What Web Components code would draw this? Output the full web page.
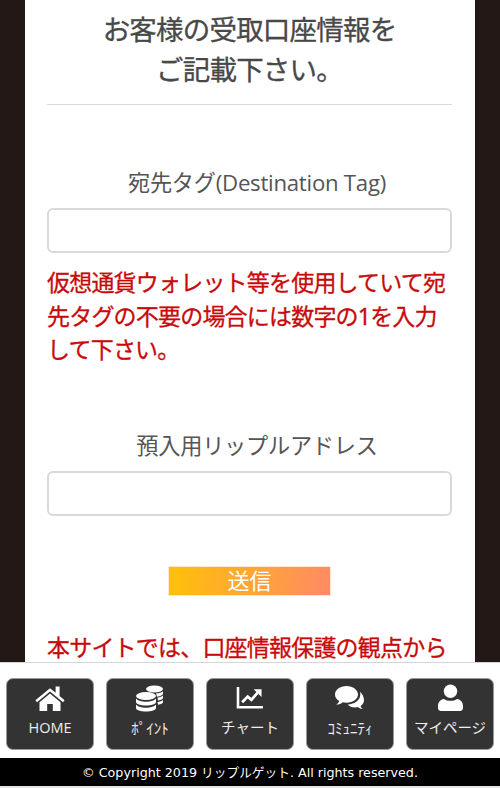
<!DOCTYPE html>
<html lang="ja"><head><meta charset="utf-8"><title>受取口座情報</title>
<style>
html,body{margin:0;padding:0;height:100%;overflow:hidden;background:#231815}
body{font-family:"Noto Sans","Noto Sans CJK JP",sans-serif}
</style></head><body>
<account-page>
  <form-title>お客様の受取口座情報を<br>ご記載下さい。</form-title>
  <form-field label="宛先タグ(Destination Tag)" style="--top:63px"></form-field>
  <warn-text style="--top:13px">仮想通貨ウォレット等を使用していて宛先タグの不要の場合には数字の1を入力して下さい。</warn-text>
  <form-field label="預入用リップルアドレス" style="--top:64px"></form-field>
  <send-button>送信</send-button>
  <warn-text style="--top:35px">本サイトでは、口座情報保護の観点から</warn-text>
</account-page>
<bottom-nav>
  <nav-item label="HOME"><svg viewBox="0 0 32 26" width="32" height="26"><path fill="#fff" d="M16 3.200 1.400 15.200l1.600 2L16 6.600l13 10.600 1.600-2-5-4.100V1.500h-4v6.300Z"/><path fill="#fff" d="M16 8.600 5.500 17.200V26h7.700v-7h5.600v7h7.700v-8.800Z"/></svg></nav-item>
  <nav-item label="ﾎﾟｲﾝﾄ" narrow><svg viewBox="0 0 30 28" width="30" height="28"><g fill="#fff"><ellipse cx="19.500" cy="5" rx="8.500" ry="3.500"/><path d="M21 9.500c3-.2 5.500-1 7-2.300v2.600c0 1.300-2.500 2.500-6 2.900ZM22.500 13.700c2.500-.3 4.500-1 5.500-2.100v2.500c0 1-2 2-5 2.500ZM22.500 18c2.500-.3 4.500-1 5.500-2.100v2.300c0 1-2 2-5 2.500Z"/><ellipse cx="11" cy="12" rx="10" ry="4"/><path d="M1 14.500c1.500 2 5.500 3.200 10 3.200s8.500-1.200 10-3.200V18c0 2-4.500 3.500-10 3.500S1 20 1 18Z"/><path d="M1 20.500c1.500 2 5.500 3.200 10 3.200s8.500-1.200 10-3.200V24c0 2-4.500 3.500-10 3.500S1 26 1 24Z"/></g></svg></nav-item>
  <nav-item label="チャート"><svg viewBox="0 0 30 26" width="28" height="24"><path fill="none" stroke="#fff" stroke-width="2.800" d="M2 1v22h27"/><path fill="none" stroke="#fff" stroke-width="3" d="m6.500 17.500 6-6 4 3.500 7-8"/><path fill="#fff" d="M19 3.500h8.500V12Z"/></svg></nav-item>
  <nav-item label="ｺﾐｭﾆﾃｨ" narrow><svg viewBox="0 0 32 26" width="32" height="26"><path fill="#fff" d="M12.500 1C6 1 1 4.800 1 9.500c0 2.700 1.600 5 4.200 6.600-.3 1.300-1.200 2.500-3 3.500 2.800 0 5-.8 6.600-2.300 1.200.3 2.400.4 3.700.4 6.500 0 11.500-3.800 11.500-8.200S19 1 12.500 1Z"/><path fill="#fff" d="M25.800 6.800c.3.900.5 1.800.5 2.700 0 5.600-5.600 9.700-12.600 9.900 1.700 1.900 4.300 3 7.300 3 1 0 2-.1 2.900-.4 1.300 1.300 2.900 2 5 2-1.200-.8-2-1.900-2.300-3.100 2.300-1.400 3.400-3.400 3.400-5.300 0-3.700-1.600-6.900-4.200-8.800Z"/></svg></nav-item>
  <nav-item label="マイページ"><svg viewBox="0 0 26 28" width="25" height="27"><circle cx="13" cy="7.500" r="7" fill="#fff"/><path fill="#fff" d="M6 15.500c2 1.300 4.300 2 7 2s5-.7 7-2c3.500.6 6 3.300 6 7V25c0 1.700-1.300 3-3 3H3c-1.700 0-3-1.300-3-3v-2.500c0-3.700 2.500-6.400 6-7Z"/></svg></nav-item>
</bottom-nav>
<copyright-bar>© Copyright 2019 リップルゲット. All rights reserved.</copyright-bar>
<script>
function def(name, css, html){
  customElements.define(name, class extends HTMLElement{
    constructor(){super();const r=this.attachShadow({mode:'open'});r.innerHTML='<style>'+css+'</style>'+html;}
  });
}
const FONT='"Noto Sans","Noto Sans CJK JP",sans-serif';
def('account-page',`:host{display:block;box-sizing:border-box;width:450px;height:788px;margin:0 auto;background:#fff;padding:0 23px 0 22px;overflow:hidden;font-family:${FONT}}`,'<slot></slot>');
def('form-title',`:host{display:block;text-align:center;font-size:27.500px;letter-spacing:-.8px;line-height:40px;font-weight:400;-webkit-text-stroke:.3px #484848;color:#484848;padding:10px 0 14px;border-bottom:1.500px solid #d9d9d9}`,'<slot></slot>');
customElements.define('form-field',class extends HTMLElement{
  constructor(){super();const r=this.attachShadow({mode:'open'});
    r.innerHTML=`<style>:host{display:block;margin-top:var(--top,0)}
    label{display:block;text-align:center;padding-left:15px;font-size:22.200px;line-height:30px;color:#555;margin-bottom:10px;font-family:"Open Sans","Noto Sans CJK JP",sans-serif;letter-spacing:-.25px}
    input{display:block;box-sizing:border-box;width:100%;height:45px;border:2px solid #d9d9d9;border-radius:6px;background:#fff;outline:0;margin:0}</style>
    <label>${this.getAttribute('label')}</label><input type="text">`;}
});
def('warn-text',`:host{display:block;margin-top:var(--top,0);font-size:23px;letter-spacing:-.8px;line-height:33.500px;font-weight:400;-webkit-text-stroke:.3px #c80a0a;color:#c80a0a;margin-right:-3px}`,'<slot></slot>');
def('send-button',`:host{display:block;box-sizing:border-box;width:163px;height:30px;margin:50px auto 0;background:linear-gradient(100deg,#ffc107,#ff8a65);border:1px solid #ffe6cf;color:#fff;font-size:22px;line-height:27px;text-align:center}`,'<slot></slot>');
def('bottom-nav',`:host{position:fixed;left:0;right:0;top:662px;height:96px;box-sizing:border-box;background:#fff;border-top:1.500px solid #d6d6d6;padding:14.500px 6px 0;display:flex;justify-content:space-between;align-items:flex-start;font-family:${FONT}}`,'<slot></slot>');
customElements.define('nav-item',class extends HTMLElement{
  constructor(){super();const r=this.attachShadow({mode:'open'});
    const n=this.hasAttribute('narrow');
    r.innerHTML=`<style>:host{display:flex;flex-direction:column;align-items:center;box-sizing:border-box;width:88px;height:72px;background:#333;border:1px solid #999;border-radius:7px;color:#fff;padding-top:4px}
    .i{height:30px;display:flex;align-items:center;justify-content:center}
    .l{margin-top:3px;font-size:${n?15:14.5}px;line-height:24px;white-space:nowrap;color:#eee;font-family:${n?FONT:'"Open Sans","Noto Sans CJK JP",sans-serif'}}</style>
    <div class="i"><slot></slot></div><div class="l">${this.getAttribute('label')}</div>`;}
});
def('copyright-bar',`:host{position:fixed;left:0;right:0;top:758px;height:28px;background:#000;color:#fff;text-align:center;font-family:"DejaVu Sans","Noto Sans CJK JP",sans-serif;font-size:12.700px;line-height:29px;white-space:nowrap;border-bottom:2px solid #e4e4e4}`,'<slot></slot>');
</script>
</body></html>
